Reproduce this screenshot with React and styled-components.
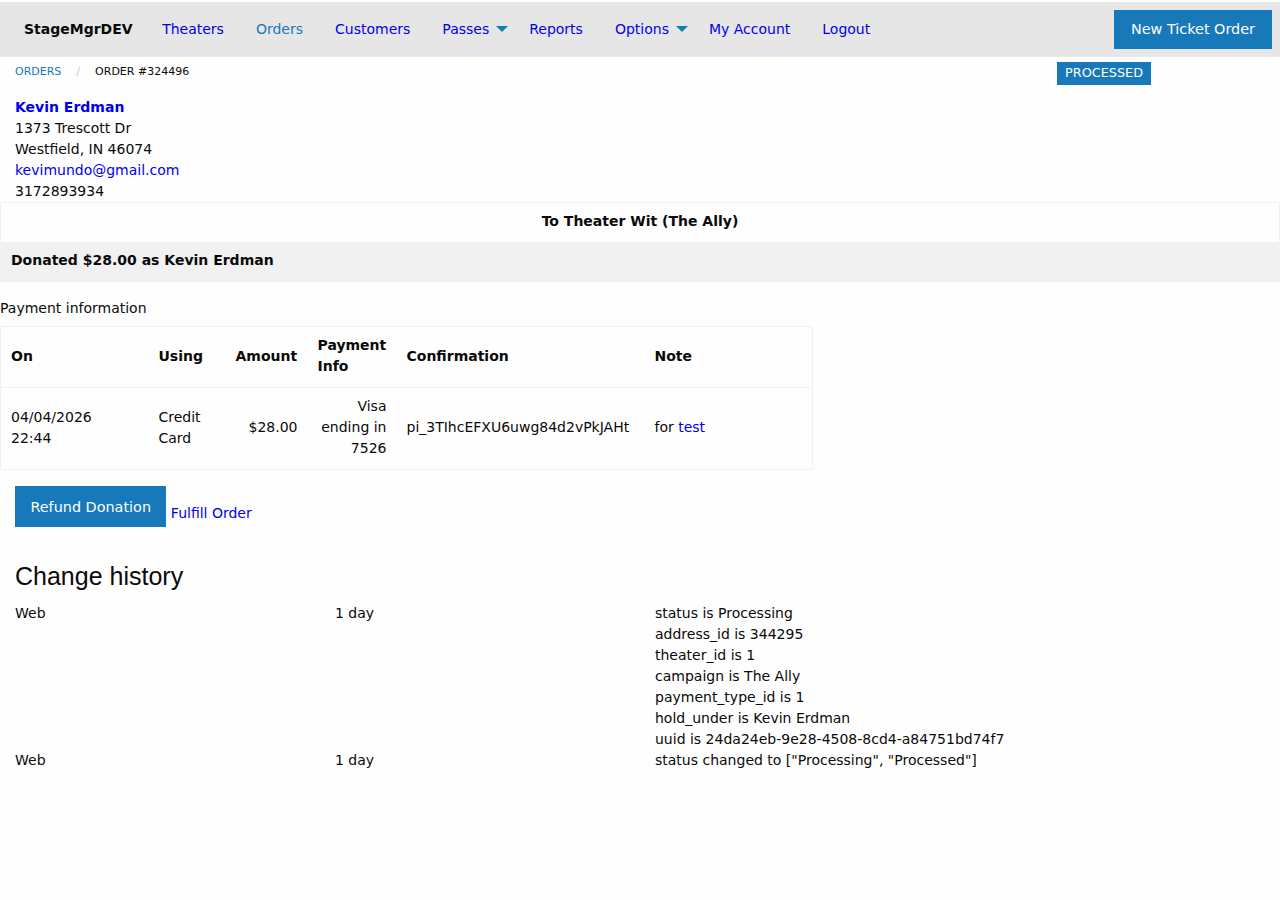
import React from 'react';
import styled, { createGlobalStyle } from 'styled-components';

const Global = createGlobalStyle`
  *, *::before, *::after { box-sizing: border-box; }
  html, body { margin: 0; padding: 0; background: #fefefe; }
  body {
    font-family: "DejaVu Sans", Verdana, sans-serif;
    font-size: 14px;
    line-height: 1.5;
    color: #0a0a0a;
  }
`;

const BLUE = '#1779ba';
const LINK = '#0000ee';

const TopBar = styled.nav`
  margin-top: 2px;
  display: flex;
  align-items: center;
  justify-content: space-between;
  padding: 8px;
  background: #e6e6e6;
`;

const Menu = styled.ul`
  list-style: none;
  margin: 0;
  padding: 0;
  display: flex;
  align-items: center;
`;

const MenuText = styled.li`
  padding: 11.2px 13.5px 11.2px 16px;
  font-weight: bold;
  line-height: 1;
`;

const MenuLink = styled.a`
  display: block;
  position: relative;
  padding: 11.2px ${p => (p.$dropdown ? '24px' : '16px')} 11.2px 16px;
  line-height: 1;
  color: ${p => (p.$active ? BLUE : LINK)};
  text-decoration: none;
  cursor: pointer;

  ${p => p.$dropdown && `
    &::after {
      content: "";
      position: absolute;
      top: 50%;
      right: 5px;
      margin-top: -3px;
      width: 0;
      height: 0;
      border: 6px solid transparent;
      border-top-color: ${BLUE};
      border-bottom-width: 0;
    }
  `}
`;

const Button = styled.a`
  display: inline-block;
  vertical-align: middle;
  margin: ${p => (p.$inline ? '0 0 16px 0' : '0')};
  padding: ${p => (p.$menu ? '11.2px 16px' : '0.85em 1em')};
  border: 1px solid transparent;
  font-family: inherit;
  font-size: 14.4px;
  line-height: 1;
  text-align: center;
  background: ${BLUE};
  color: #fefefe;
  text-decoration: none;
  cursor: pointer;
`;

const StatusRow = styled.div`
  display: flex;
  justify-content: space-between;
  align-items: flex-start;
  padding: 5px 129px 0 15px;
`;

const Crumbs = styled.ul`
  list-style: none;
  margin: 2px 0 17px;
  padding: 0;
  display: flex;
`;

const Crumb = styled.li`
  font-size: 11px;
  line-height: 1.5;
  text-transform: uppercase;
  color: #0a0a0a;

  &:not(:last-child)::after {
    content: "/";
    margin: 0 15px;
    color: #cacaca;
  }

  a { color: ${BLUE}; text-decoration: none; }
`;

const Label = styled.span`
  display: inline-block;
  padding: 5.33px 8px;
  font-size: 12.8px;
  line-height: 1;
  white-space: nowrap;
  background: ${BLUE};
  color: #fefefe;
`;

const Customer = styled.div`
  padding: 0 15px;
`;

const NameLink = styled.a`
  font-weight: bold;
  color: ${LINK};
  text-decoration: none;
`;

const TextLink = styled.a`
  color: ${LINK};
  text-decoration: none;
`;

const Table = styled.table`
  border-collapse: collapse;
  width: ${p => p.$width || '100%'};
  table-layout: ${p => (p.$fixed ? 'fixed' : 'auto')};
  margin: 0 0 16px;

  tbody, thead {
    border: 1px solid #f1f1f1;
    background: #fefefe;
  }
  tbody tr:nth-child(even) { background: #f1f1f1; }
  th, td {
    padding: 8px 10px 10px;
    vertical-align: middle;
  }
  th { font-weight: bold; text-align: left; }
`;

const Cell = styled.td`
  text-align: ${p => p.$align || 'left'};
  font-weight: ${p => (p.$bold ? 'bold' : 'normal')};
`;

const Caption = styled.div`
  margin: 0 0 7px;
`;

const Actions = styled.div`
  padding: 0 15px;
`;

const Heading = styled.h4`
  margin: 16px 15px 9px;
  font-family: "Liberation Sans", Arial, Helvetica, sans-serif;
  font-size: 25px;
  font-weight: normal;
  line-height: 1.4;
  color: #0a0a0a;
`;

const History = styled.div`
  display: grid;
  grid-template-columns: 320px 320px 1fr;
`;

const HistCell = styled.div`
  padding: 0 15px;
`;

const history = [
  {
    who: 'Web',
    when: '1 day',
    changes: [
      'status is Processing',
      'address_id is 344295',
      'theater_id is 1',
      'campaign is The Ally',
      'payment_type_id is 1',
      'hold_under is Kevin Erdman',
      'uuid is 24da24eb-9e28-4508-8cd4-a84751bd74f7',
    ],
  },
  {
    who: 'Web',
    when: '1 day',
    changes: ['status changed to ["Processing", "Processed"]'],
  },
];

export default function App() {
  return (
    <>
      <Global />
      <TopBar>
        <Menu>
          <MenuText>StageMgrDEV</MenuText>
          <li><MenuLink>Theaters</MenuLink></li>
          <li><MenuLink $active>Orders</MenuLink></li>
          <li><MenuLink>Customers</MenuLink></li>
          <li><MenuLink $dropdown>Passes</MenuLink></li>
          <li><MenuLink>Reports</MenuLink></li>
          <li><MenuLink $dropdown>Options</MenuLink></li>
          <li><MenuLink>My Account</MenuLink></li>
          <li><MenuLink>Logout</MenuLink></li>
        </Menu>
        <Button $menu>New Ticket Order</Button>
      </TopBar>

      <StatusRow>
        <Crumbs>
          <Crumb><a>Orders</a></Crumb>
          <Crumb>Order #324496</Crumb>
        </Crumbs>
        <Label>PROCESSED</Label>
      </StatusRow>

      <Customer>
        <NameLink>Kevin Erdman</NameLink>
        <div>1373 Trescott Dr</div>
        <div>Westfield, IN 46074</div>
        <div><TextLink>kevimundo@gmail.com</TextLink></div>
        <div>3172893934</div>
      </Customer>

      <Table>
        <tbody>
          <tr><Cell $align="center" $bold>To Theater Wit (The Ally)</Cell></tr>
          <tr><Cell $bold>Donated $28.00 as Kevin Erdman</Cell></tr>
        </tbody>
      </Table>

      <Caption>Payment information</Caption>
      <Table $width="813px" $fixed>
        <colgroup>
          <col style={{ width: 148 }} />
          <col style={{ width: 77 }} />
          <col style={{ width: 82 }} />
          <col style={{ width: 89 }} />
          <col style={{ width: 248 }} />
          <col />
        </colgroup>
        <thead>
          <tr>
            <th>On</th>
            <th>Using</th>
            <th>Amount</th>
            <th>Payment Info</th>
            <th>Confirmation</th>
            <th>Note</th>
          </tr>
        </thead>
        <tbody>
          <tr>
            <Cell>04/04/2026<br />22:44</Cell>
            <Cell>Credit Card</Cell>
            <Cell $align="right">$28.00</Cell>
            <Cell $align="right">Visa ending in 7526</Cell>
            <Cell>pi_3TIhcEFXU6uwg84d2vPkJAHt</Cell>
            <Cell>for <TextLink>test</TextLink></Cell>
          </tr>
        </tbody>
      </Table>

      <Actions>
        <Button $inline>Refund Donation</Button> <TextLink>Fulfill Order</TextLink>
      </Actions>

      <Heading>Change history</Heading>
      <History>
        {history.map((h, i) => (
          <React.Fragment key={i}>
            <HistCell>{h.who}</HistCell>
            <HistCell>{h.when}</HistCell>
            <HistCell>
              {h.changes.map((c, j) => (
                <div key={j}>{c}</div>
              ))}
            </HistCell>
          </React.Fragment>
        ))}
      </History>
    </>
  );
}
